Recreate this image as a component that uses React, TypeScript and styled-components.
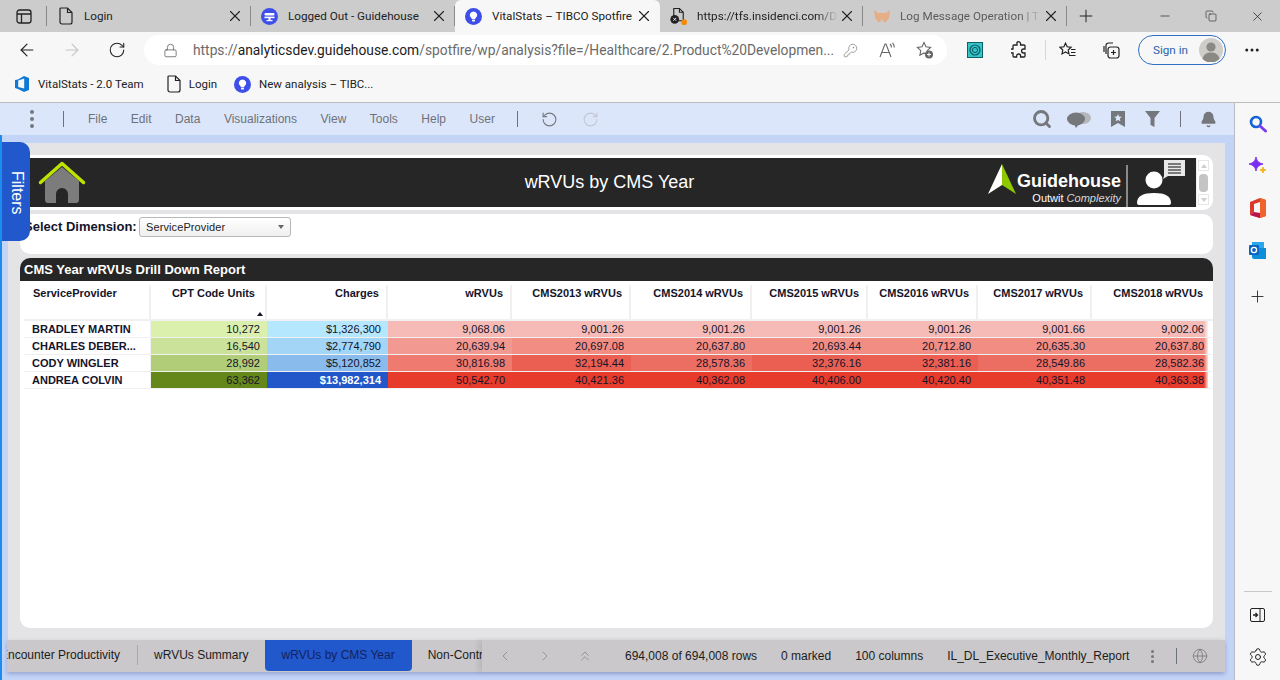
import React from 'react';
import styled, { createGlobalStyle } from 'styled-components';
import {
  ArrowLeft,
  ArrowRight,
  Bell,
  ChevronLeft,
  ChevronRight,
  ChevronsUp,
  Copy,
  Globe,
  KeyRound,
  Lock,
  Minus,
  MoreHorizontal,
  Plus,
  RotateCcw,
  RotateCw,
  Search,
  Settings,
  X,
} from 'lucide-react';

const COLUMNS = '127px 116px 121px 124px 119px 121px 116px 110px 114px 116px';
const CHROME_FONT = 'Roboto, "Noto Sans", sans-serif';
const APP_FONT = '"Liberation Sans", Arial, sans-serif';

const GlobalStyle = createGlobalStyle`
  html, body, #root { margin: 0; padding: 0; height: 100%; }
  body { overflow: hidden; background: #f7f7f7; }
  * { box-sizing: border-box; }
`;

const DocIcon = () => (
  <svg width="14" height="18" viewBox="0 0 14 18" fill="none" stroke="#222" strokeWidth="1.2">
    <path d="M2 1h6.5L13 5.5V15a2 2 0 0 1-2 2H3a2 2 0 0 1-2-2V2a1 1 0 0 1 1-1z" />
    <path d="M8.5 1v4.5H13" />
  </svg>
);

const SpotfireIcon = () => (
  <svg width="17" height="17" viewBox="0 0 17 17">
    <circle cx="8.5" cy="8.5" r="8.5" fill="#3d4fe8" />
    <path d="M8.5 3.4a3.7 3.7 0 0 0-2.2 6.7c.4.3.6.7.6 1.1h3.2c0-.4.2-.8.6-1.1a3.7 3.7 0 0 0-2.2-6.7z" fill="#fff" />
    <rect x="7" y="11.8" width="3" height="1.6" rx=".6" fill="#fff" />
  </svg>
);

const GuidehouseTabIcon = () => (
  <svg width="17" height="17" viewBox="0 0 17 17">
    <circle cx="8.5" cy="8.5" r="8.5" fill="#3d4fe8" />
    <rect x="3.5" y="5" width="10" height="2.6" rx="1" fill="#fff" />
    <rect x="3.5" y="8.6" width="10" height="1.6" fill="#fff" />
    <rect x="7.5" y="10" width="2" height="3" fill="#fff" />
    <rect x="5.5" y="12" width="6" height="1.2" fill="#fff" />
  </svg>
);

const TfsIcon = () => (
  <svg width="18" height="19" viewBox="0 0 18 19" fill="none">
    <path d="M4 1h6l4 4v9H4z" stroke="#222" strokeWidth="1.2" />
    <path d="M10 1v4h4" stroke="#222" strokeWidth="1.2" />
    <circle cx="5" cy="12.5" r="4.6" fill="#222" />
    <path d="M3.5 11l3 3M6.5 11l-3 3" stroke="#fff" strokeWidth=".9" />
    <circle cx="15" cy="15.5" r="3" fill="#f58a07" />
  </svg>
);

const FoxIcon = () => (
  <svg width="16" height="13" viewBox="0 0 16 13">
    <path d="M0 0l4 3h8l4-3-1 8-3 4h-2L8 9l-2 3H4L1 8z" fill="#e6ae86" />
  </svg>
);

const AzureIcon = () => (
  <svg width="16" height="18" viewBox="0 0 16 18">
    <path d="M10 1L4 4.5 1 5v8l3 1 6 3 5-2V3z" fill="#0f78d4" />
    <path d="M4.2 5.5l6-2v10l-6-1.4z" fill="#f7f7f7" />
  </svg>
);

const ExtensionTile = () => (
  <svg width="16" height="16" viewBox="0 0 16 16" fill="none">
    <rect width="16" height="16" fill="#35c4c8" />
    <rect x=".5" y=".5" width="15" height="15" stroke="#0f5f68" />
    <circle cx="8" cy="8" r="5" stroke="#0d5964" strokeWidth="1.2" />
    <circle cx="8" cy="8" r="2.6" stroke="#0d5964" />
  </svg>
);

const PuzzleIcon = () => (
  <svg width="16" height="18" viewBox="0 0 16 18" fill="none" stroke="#222" strokeWidth="1.3">
    <path d="M6 1.5a2 2 0 0 1 3.6 1.2V4H13a1 1 0 0 1 1 1v3h-1.4a2 2 0 0 0 0 4H14v3a1 1 0 0 1-1 1H9.6v-1a2 2 0 0 0-4 0v1H3a1 1 0 0 1-1-1v-3H1a2 2 0 0 1 0-4h1V5a1 1 0 0 1 1-1h3z" />
  </svg>
);

const FavListIcon = () => (
  <svg width="17" height="16" viewBox="0 0 17 16" fill="none" stroke="#222" strokeWidth="1.2">
    <path d="M6.5 1.2l1.7 3.6 3.9.5-2.9 2.7.8 3.9-3.5-2-3.5 2 .8-3.9L1 5.3l3.9-.5z" />
    <path d="M12 7.5h4.5M12 10.5h4.5M10 13.5h6.5" />
  </svg>
);

const CollectionsIcon = () => (
  <svg width="17" height="17" viewBox="0 0 17 17" fill="none" stroke="#222" strokeWidth="1.2">
    <path d="M3 12V3.5A2.5 2.5 0 0 1 5.5 1H10" />
    <path d="M1 10V4" />
    <rect x="5" y="5" width="11" height="11" rx="2.5" />
    <path d="M10.5 8v5M8 10.5h5" />
  </svg>
);

const StarAddIcon = () => (
  <svg width="18" height="18" viewBox="0 0 18 18" fill="none">
    <path d="M8 1.5l2 4.3 4.6.6-3.4 3.2.9 4.6L8 11.9l-4.1 2.3.9-4.6L1.400 6.400 6 5.800z" stroke="#666" strokeWidth="1.1" />
    <circle cx="13" cy="13.5" r="4" fill="#666" />
    <path d="M13 11.5v4M11 13.5h4" stroke="#fff" strokeWidth="1" />
  </svg>
);

const ReadAloudIcon = () => (
  <svg width="16" height="16" viewBox="0 0 16 16" fill="none" stroke="#666" strokeWidth="1.1">
    <path d="M1 15L6 2h1l5 13M3 10.5h7" />
    <path d="M11 2c1 1 1.5 2 1.5 3.5M13.5 .8c1.2 1.3 1.8 2.9 1.8 4.7" />
  </svg>
);

const PaneIcon = () => (
  <svg width="16" height="15" viewBox="0 0 16 15" fill="none" stroke="#222" strokeWidth="1.3">
    <rect x="1" y="1" width="14" height="13" rx="2.5" />
    <path d="M1 5h14M5.5 5v9" />
  </svg>
);

const Avatar = () => (
  <svg width="24" height="24" viewBox="0 0 24 24">
    <circle cx="12" cy="12" r="12" fill="#cfcdc9" />
    <circle cx="12" cy="9" r="4.6" fill="#8b8984" />
    <path d="M3.5 21c1-5 4.5-6.500 8.500-6.500s7.500 1.500 8.500 6.500A12 12 0 0 1 3.500 21z" fill="#8b8984" />
  </svg>
);

const ChatsIcon = () => (
  <svg width="24" height="17" viewBox="0 0 24 17">
    <ellipse cx="16" cy="7" rx="8" ry="6" fill="#b4b6ba" />
    <ellipse cx="9" cy="8" rx="9" ry="6.5" fill="#74777c" />
    <path d="M7 13l2 4 3-4z" fill="#74777c" />
  </svg>
);

const BookmarkStarIcon = () => (
  <svg width="14" height="16" viewBox="0 0 14 16">
    <path d="M0 0h14v16l-7-4-7 4z" fill="#74777c" />
    <path d="M7 3l1.1 2.5 2.7.3-2 1.8.6 2.7L7 8.900l-2.400 1.400.6-2.700-2-1.800 2.700-.3z" fill="#dce6fb" />
  </svg>
);

const FunnelIcon = () => (
  <svg width="15" height="16" viewBox="0 0 15 16">
    <path d="M0 0h15L9.5 7v9l-4-2V7z" fill="#74777c" />
  </svg>
);

const HomeIcon = () => (
  <svg width="48" height="43" viewBox="0 0 48 43" fill="none">
    <path d="M7 20L24 6l17 14v19a3 3 0 0 1-3 3h-8V33a6 6 0 0 0-12 0v9h-8a3 3 0 0 1-3-3z" fill="#7c7c7c" />
    <path d="M2.5 21.5L24 2.5l21.5 19" stroke="#bfe300" strokeWidth="3.5" strokeLinecap="round" strokeLinejoin="round" />
  </svg>
);

const LogoMark = () => (
  <svg width="28" height="30" viewBox="0 0 28 30">
    <path d="M14 0L0 30l14-9z" fill="#fff" />
    <path d="M14 0l14 30-14-9z" fill="#8fc700" />
  </svg>
);

const PersonChatIcon = () => (
  <svg width="50" height="46" viewBox="0 0 50 46">
    <path d="M27 0h21v16H31l-5 3 1-3z" fill="#e8e8e8" />
    <path d="M31 4h13M31 7h13M31 10h13M31 13h13" stroke="#555" strokeWidth="1.5" />
    <circle cx="17" cy="20" r="8.5" fill="#fff" />
    <path d="M0 43c0-7 6-10 17-10s17 3 17 10a2 2 0 0 1-2 2H2a2 2 0 0 1-2-2z" fill="#fff" />
  </svg>
);

const SideSearch = () => (
  <svg width="18" height="18" viewBox="0 0 18 18" fill="none" strokeLinecap="round">
    <circle cx="7" cy="7" r="5" stroke="#1264d8" strokeWidth="2.6" />
    <path d="M11 11l5.5 5" stroke="#7c3cec" strokeWidth="3" />
  </svg>
);

const SideSpark = () => (
  <svg width="20" height="20" viewBox="0 0 20 20">
    <path d="M8 1c.8 4 2.5 6 7 7-4.5 1-6.2 3-7 7-.8-4-2.500-6-7-7 4.500-1 6.200-3 7-7z" fill="#7a2ff0" stroke="#7a2ff0" />
    <path d="M15 11c.3 2 1 2.7 3 3-2 .3-2.7 1-3 3-.3-2-1-2.700-3-3 2-.3 2.700-1 3-3z" fill="#f7b012" stroke="#f7b012" />
  </svg>
);

const SideOffice = () => (
  <svg width="16" height="20" viewBox="0 0 16 20">
    <path d="M0 4l10-4 6 2v16l-6 2-10-3 10 1V4L4 6v8l-4 3z" fill="#d83b2b" />
    <path d="M10 0l6 2v16l-6 2z" fill="#f0642c" />
    <path d="M0 17l4-3 6 1v5z" fill="#b8134f" />
  </svg>
);

const SideOutlook = () => (
  <svg width="17" height="17" viewBox="0 0 17 17" fill="none">
    <rect x="3" y="0" width="12" height="8" fill="#28a8ea" />
    <path d="M3 6h14v11H5a2 2 0 0 1-2-2z" fill="#0c8fd8" />
    <rect x="0" y="3" width="10" height="10" rx="1" fill="#0a64c2" />
    <circle cx="5" cy="8" r="2.6" stroke="#fff" strokeWidth="1.4" />
  </svg>
);

const SidePanelIcon = () => (
  <svg width="15" height="14" viewBox="0 0 15 14" fill="none" stroke="#222">
    <rect x=".5" y=".5" width="14" height="13" rx="1.5" />
    <path d="M10 .5v13" />
    <path d="M3 7h4M5.5 5l2 2-2 2" strokeWidth="1.3" />
  </svg>
);

const Page = styled.div`
  width: 1280px;
  height: 680px;
  display: flex;
  flex-direction: column;
  overflow: hidden;
  font-family: ${CHROME_FONT};
`;

const TabStrip = styled.div`
  height: 32px;
  background: #cccccc;
  display: flex;
  align-items: stretch;
  flex: none;
`;

const StripButton = styled.div`
  width: 47px;
  display: flex;
  align-items: center;
  justify-content: center;
  position: relative;
  &::after {
    content: '';
    position: absolute;
    right: 0;
    top: 6px;
    bottom: 6px;
    width: 1px;
    background: #8a8a8a;
  }
`;

const Tab = styled.div<{ $active?: boolean; $width: number; $dim?: boolean }>`
  width: ${({ $width }) => $width}px;
  display: flex;
  align-items: center;
  gap: 10px;
  padding: 0 10px;
  font-size: 11.7px;
  color: ${({ $dim }) => ($dim ? '#5c5c5c' : '#222')};
  background: ${({ $active }) => ($active ? '#f7f7f7' : 'transparent')};
  border-radius: ${({ $active }) => ($active ? '6px 6px 0 0' : '0')};
  position: relative;
  &::after {
    content: '';
    display: ${({ $active }) => ($active ? 'none' : 'block')};
    position: absolute;
    right: 0;
    top: 6px;
    bottom: 6px;
    width: 1px;
    background: #8a8a8a;
  }
`;

const TabIcon = styled.span`
  width: 17px;
  flex: none;
  display: flex;
  align-items: center;
  justify-content: center;
`;

const TabLabel = styled.span<{ $fade?: boolean }>`
  flex: 1;
  min-width: 0;
  white-space: nowrap;
  overflow: hidden;
  ${({ $fade }) =>
    $fade
      ? `-webkit-mask-image: linear-gradient(to right, #000 85%, transparent);
         mask-image: linear-gradient(to right, #000 85%, transparent);`
      : ''}
`;

const TabClose = styled(X)`
  width: 18px;
  height: 18px;
  margin: 0 -3px 0 -10px;
  flex: none;
`;

const StripPlus = styled.div`
  width: 37px;
  display: flex;
  align-items: center;
  justify-content: center;
`;

const WindowControls = styled.div`
  margin-left: auto;
  display: flex;
  align-items: center;
  gap: 33px;
  padding-right: 15px;
`;

const NavBar = styled.div`
  height: 36px;
  flex: none;
  background: #f7f7f7;
  display: flex;
  align-items: center;
  padding-left: 17px;
`;

const NavButton = styled.div<{ $gap?: number }>`
  width: 20px;
  height: 20px;
  margin-left: ${({ $gap }) => $gap ?? 0}px;
  display: flex;
  align-items: center;
  justify-content: center;
  flex: none;
`;

const AddressBar = styled.div`
  width: 803px;
  height: 30px;
  margin-left: 17px;
  border-radius: 15px;
  background: #fff;
  display: flex;
  align-items: center;
  padding: 0 13px 0 19px;
  flex: none;
`;

const Url = styled.div`
  flex: 1;
  margin-left: 15px;
  font-size: 13.8px;
  color: #6a6a6a;
  white-space: nowrap;
  overflow: hidden;
  b {
    font-weight: 400;
    color: #1c1c1c;
  }
`;

const AddressTools = styled.div`
  display: flex;
  align-items: center;
  gap: 21px;
`;

const NavDivider = styled.div`
  width: 1px;
  height: 20px;
  background: #d6d6d6;
  margin-left: 16px;
  flex: none;
`;

const SignIn = styled.div`
  width: 88px;
  height: 30px;
  margin-left: 17px;
  border: 1px solid #2f6fc4;
  border-radius: 15px;
  display: flex;
  align-items: center;
  justify-content: space-between;
  padding: 0 2px 0 14px;
  font-size: 11.7px;
  color: #2a63ad;
  flex: none;
`;

const BookmarkBar = styled.div`
  height: 35px;
  flex: none;
  background: #f7f7f7;
  border-bottom: 1px solid #bdbdbd;
  display: flex;
  align-items: center;
  padding: 0 0 2px 14px;
  font-size: 11.5px;
  color: #222;
`;

const Bookmark = styled.div<{ $gap?: number }>`
  display: flex;
  align-items: center;
  gap: 8px;
  margin-left: ${({ $gap }) => $gap ?? 0}px;
`;

const Body = styled.div`
  flex: 1;
  min-height: 0;
  display: flex;
`;

const Main = styled.div`
  width: 1235px;
  flex: none;
  position: relative;
  background: #c3d4f7;
  border-right: 1px solid #b9bcc4;
  display: flex;
  flex-direction: column;
  font-family: ${APP_FONT};
  &::before {
    content: '';
    position: absolute;
    left: 0;
    top: 32px;
    bottom: 0;
    width: 2px;
    background: #1c8cf0;
  }
`;

const AppBar = styled.div`
  height: 32px;
  flex: none;
  background: #dce6fb;
  display: flex;
  align-items: center;
  color: #6d7279;
  font-size: 12px;
`;

const DotsSlot = styled.div`
  width: 63px;
  display: flex;
  justify-content: center;
  padding-left: 1px;
`;

const Dots = styled.span<{ $small?: boolean }>`
  display: flex;
  flex-direction: column;
  gap: ${({ $small }) => ($small ? 2 : 3)}px;
  i {
    display: block;
    width: ${({ $small }) => ($small ? 3 : 4)}px;
    height: ${({ $small }) => ($small ? 3 : 4)}px;
    border-radius: 50%;
    background: #74777c;
  }
`;

const BarDivider = styled.div<{ $gap?: number }>`
  width: 1px;
  height: 16px;
  margin-left: ${({ $gap }) => $gap ?? 0}px;
  background: #6d7279;
  flex: none;
`;

const Menu = styled.div`
  display: flex;
  gap: 23.5px;
  padding: 0 22px 0 24px;
`;

const UndoGroup = styled.div`
  display: flex;
  gap: 24px;
  margin-left: 23px;
  align-items: center;
`;

const BarTools = styled.div`
  margin-left: auto;
  display: flex;
  align-items: center;
  gap: 20px;
  padding-right: 18px;
`;

const BarSearch = styled(Search)`
  margin-right: -5px;
`;

const BarBell = styled(Bell)`
  margin: 0 -1px;
`;

const Workspace = styled.div`
  flex: 1;
  min-height: 0;
  margin: 8px 9px 0 8px;
  background: #e4e4e6;
  padding: 12px;
  display: flex;
  flex-direction: column;
  gap: 4px;
`;

const FiltersTab = styled.div`
  position: absolute;
  left: 2px;
  top: 39px;
  width: 28px;
  height: 99px;
  padding: 3px 0 0 1px;
  background: #2158cb;
  border-radius: 0 10px 10px 0;
  color: #fff;
  font-size: 16px;
  display: flex;
  align-items: center;
  justify-content: center;
  writing-mode: vertical-rl;
  z-index: 2;
`;

const HeaderPanel = styled.div`
  height: 55px;
  flex: none;
  background: #fff;
  border-radius: 0 10px 10px 0;
  padding: 3px 3px 3px 0;
  display: flex;
`;

const HeaderBar = styled.div`
  flex: 1;
  background: #262626;
  display: flex;
  align-items: center;
  position: relative;
  padding-left: 18px;
`;

const HeaderTitle = styled.div`
  position: absolute;
  left: 0;
  right: 0;
  top: 13px;
  padding-left: 3px;
  text-align: center;
  color: #fff;
  font-size: 18px;
  line-height: 22px;
`;

const Brand = styled.div`
  margin-left: auto;
  display: flex;
  align-items: flex-start;
  height: 100%;
  position: relative;
`;

const BrandMark = styled.div`
  margin: 6px 1px 0 0;
`;

const BrandText = styled.div`
  color: #fff;
  text-align: right;
  padding-top: 13px;
  strong {
    display: block;
    font-size: 18px;
    line-height: 20px;
  }
  span {
    display: block;
    font-size: 11px;
    line-height: 14px;
    em {
      font-weight: 300;
      color: #d8d8d8;
    }
  }
`;

const BrandDivider = styled.div`
  width: 2px;
  height: 42px;
  margin: 7px 9px 0 5px;
  background: #8a8a8a;
`;

const BrandPerson = styled.div`
  margin: 2px 9px 0 0;
  height: 47px;
`;

const MiniScroll = styled.div`
  width: 14px;
  flex: none;
  background: #fff;
  display: flex;
  flex-direction: column;
  align-items: center;
  justify-content: space-between;
  padding: 2px 0;
  border-left: 1px solid #eee;
`;

const ScrollArrow = styled.div<{ $down?: boolean }>`
  width: 11px;
  height: 11px;
  border: 1px solid #e6e6e6;
  display: flex;
  align-items: center;
  justify-content: center;
  &::after {
    content: '';
    border-left: 3px solid transparent;
    border-right: 3px solid transparent;
    border-${({ $down }) => ($down ? 'top' : 'bottom')}: 4px solid #cfcfcf;
  }
`;

const Thumb = styled.div`
  width: 9px;
  height: 18px;
  border-radius: 4px;
  background: #c4c4c4;
`;

const SelectPanel = styled.div`
  height: 40px;
  flex: none;
  background: #fff;
  border-radius: 10px;
  display: flex;
  align-items: flex-start;
  padding: 3px 0 0 4px;
`;

const SelectLabel = styled.label`
  width: 115px;
  flex: none;
  font-size: 13px;
  font-weight: 700;
  color: #14142a;
  line-height: 20px;
  white-space: nowrap;
`;

const SelectBox = styled.div`
  width: 152px;
  height: 20px;
  border: 1px solid #b8b8b8;
  border-radius: 3px;
  background: linear-gradient(#ffffff, #efefef);
  font-size: 11px;
  color: #222;
  display: flex;
  align-items: center;
  justify-content: space-between;
  padding: 0 6px;
  letter-spacing: 0.1px;
  &::after {
    content: '';
    border-left: 3.5px solid transparent;
    border-right: 3.5px solid transparent;
    border-top: 4px solid #666;
  }
`;

const ReportPanel = styled.div`
  flex: 1;
  min-height: 0;
  background: #fff;
  border-radius: 10px;
`;

const ReportTitle = styled.div`
  height: 23px;
  background: #262626;
  border-radius: 10px 10px 0 0;
  color: #fff;
  font-size: 13px;
  font-weight: 700;
  line-height: 23px;
  padding-left: 4px;
`;

const Table = styled.div`
  padding-left: 4px;
  font-size: 11px;
  color: #14142a;
`;

const HeadRow = styled.div`
  display: grid;
  grid-template-columns: ${COLUMNS};
  height: 40px;
  padding-top: 4px;
  border-bottom: 2px solid #f0f0f0;
`;

const HeadCell = styled.div<{ $left?: boolean; $sorted?: boolean }>`
  position: relative;
  font-weight: 700;
  line-height: 16px;
  white-space: nowrap;
  text-align: ${({ $left }) => ($left ? 'left' : 'right')};
  padding: 0 7px 0 9px;
  border-right: 2px solid #f0f0f0;
  &:nth-child(2) {
    padding-right: 10px;
  }
  &:last-child {
    padding-right: 5px;
    border-right: 0;
  }
  &::after {
    content: '';
    display: ${({ $sorted }) => ($sorted ? 'block' : 'none')};
    position: absolute;
    right: 2px;
    bottom: 3px;
    border-left: 3.5px solid transparent;
    border-right: 3.5px solid transparent;
    border-bottom: 4px solid #14142a;
  }
`;

const DataRow = styled.div`
  display: grid;
  grid-template-columns: ${COLUMNS};
  height: 17px;
  border-bottom: 1px solid #f0f0f0;
  position: relative;
  &::after {
    content: '';
    position: absolute;
    right: 5px;
    top: 0;
    bottom: 0;
    width: 4px;
    background: linear-gradient(to right, rgba(255, 255, 255, 0), rgba(255, 255, 255, 0.8));
  }
`;

const NameCell = styled.div`
  font-weight: 700;
  line-height: 16px;
  padding-left: 8px;
  white-space: nowrap;
  overflow: hidden;
  border-right: 1px solid #f0f0f0;
`;

const ValueCell = styled.div<{ $bg: string; $light?: boolean }>`
  background: ${({ $bg }) => $bg};
  color: ${({ $light }) => ($light ? '#fff' : '#14142a')};
  font-weight: ${({ $light }) => ($light ? 700 : 400)};
  line-height: 16px;
  text-align: right;
  padding-right: 7px;
  &:last-child {
    padding-right: 4px;
  }
`;

const StatusBar = styled.div`
  height: 32px;
  flex: none;
  margin: 0 9px 8px 7px;
  background: #cac8cb;
  box-shadow: 0 2px 4px rgba(60, 80, 140, 0.35);
  display: flex;
  font-size: 12px;
  color: #1c1c1c;
`;

const PageTabs = styled.div`
  width: 475px;
  flex: none;
  overflow: hidden;
  display: flex;
`;

const PageTab = styled.div<{ $active?: boolean; $first?: boolean }>`
  flex: none;
  padding: 0 ${({ $active }) => ($active ? 17 : 16)}px;
  margin-left: ${({ $first }) => ($first ? '-23px' : '0')};
  line-height: 30px;
  height: 31px;
  white-space: nowrap;
  background: ${({ $active }) => ($active ? '#2158cb' : 'transparent')};
  color: ${({ $active }) => ($active ? '#14235f' : '#1c1c1c')};
  border-radius: ${({ $active }) => ($active ? '0 0 4px 4px' : '0')};
`;

const TabRule = styled.div`
  width: 1px;
  height: 20px;
  margin: 5px 0 0 1px;
  background: #aaa8ab;
  flex: none;
`;

const StatusRight = styled.div`
  flex: 1;
  display: flex;
  align-items: center;
  padding-left: 15px;
  background: #cac8cb;
  box-shadow: -4px 0 5px rgba(0, 0, 0, 0.08);
  z-index: 1;
`;

const Arrows = styled.div`
  display: flex;
  gap: 24px;
  color: #86868a;
  margin-right: 32px;
  line-height: 0;
`;

const Stats = styled.div`
  display: flex;
  gap: 24px;
  white-space: nowrap;
`;

const StatusTools = styled.div`
  display: flex;
  align-items: center;
  margin-left: 22px;
`;

const StatusGlobe = styled(Globe)`
  margin-left: 15px;
`;

const Sidebar = styled.div`
  width: 45px;
  flex: none;
  background: #f7f7f7;
  display: flex;
  flex-direction: column;
  align-items: center;
  padding: 11px 0 13px;
`;

const SideItem = styled.div<{ $shift?: number }>`
  width: 20px;
  height: 20px;
  display: flex;
  align-items: center;
  justify-content: center;
  margin-top: ${({ $shift }) => $shift ?? 0}px;
  margin-bottom: 22px;
  &:last-child {
    margin-bottom: 0;
  }
`;

const SideRule = styled.div`
  width: 28px;
  height: 1px;
  background: #c8c8c8;
  margin: auto 0 13px;
`;

type Row = { name: string; values: [string, string][]; light?: boolean };

const headers = [
  'CPT Code Units',
  'Charges',
  'wRVUs',
  'CMS2013 wRVUs',
  'CMS2014 wRVUs',
  'CMS2015 wRVUs',
  'CMS2016 wRVUs',
  'CMS2017 wRVUs',
  'CMS2018 wRVUs',
];

const rows: Row[] = [
  {
    name: 'BRADLEY MARTIN',
    values: [
      ['10,272', '#dcf0ae'],
      ['$1,326,300', '#b5e7ff'],
      ['9,068.06', '#f6bbb6'],
      ['9,001.26', '#f6bbb6'],
      ['9,001.26', '#f6bbb6'],
      ['9,001.26', '#f6bbb6'],
      ['9,001.26', '#f6bbb6'],
      ['9,001.66', '#f6bbb6'],
      ['9,002.06', '#f6bbb6'],
    ],
  },
  {
    name: 'CHARLES DEBER...',
    values: [
      ['16,540', '#cbe29b'],
      ['$2,774,790', '#a3d5f6'],
      ['20,639.94', '#f29a92'],
      ['20,697.08', '#f28d84'],
      ['20,637.80', '#f28d84'],
      ['20,693.44', '#f28d84'],
      ['20,712.80', '#f28d84'],
      ['20,635.30', '#f28d84'],
      ['20,637.80', '#f28d84'],
    ],
  },
  {
    name: 'CODY WINGLER',
    values: [
      ['28,992', '#b2cd78'],
      ['$5,120,852', '#89bbec'],
      ['30,816.98', '#ef7a6f'],
      ['32,194.44', '#eb5f52'],
      ['28,578.36', '#ec6d61'],
      ['32,376.16', '#eb5f52'],
      ['32,381.16', '#eb5f52'],
      ['28,549.86', '#ec6d61'],
      ['28,582.36', '#ec6d61'],
    ],
  },
  {
    name: 'ANDREA COLVIN',
    light: true,
    values: [
      ['63,362', '#65871a'],
      ['$13,982,314', '#2157c9'],
      ['50,542.70', '#e73c2c'],
      ['40,421.36', '#e73c2c'],
      ['40,362.08', '#e73c2c'],
      ['40,406.00', '#e73c2c'],
      ['40,420.40', '#e73c2c'],
      ['40,351.48', '#e73c2c'],
      ['40,363.38', '#e73c2c'],
    ],
  },
];

const menu = ['File', 'Edit', 'Data', 'Visualizations', 'View', 'Tools', 'Help', 'User'];

export default function App(): JSX.Element {
  return (
    <Page>
      <GlobalStyle />
      <TabStrip>
        <StripButton>
          <PaneIcon />
        </StripButton>
        <Tab $width={204}>
          <TabIcon><DocIcon /></TabIcon>
          <TabLabel>Login</TabLabel>
          <TabClose strokeWidth={1.5} />
        </Tab>
        <Tab $width={204}>
          <TabIcon><GuidehouseTabIcon /></TabIcon>
          <TabLabel>Logged Out - Guidehouse</TabLabel>
          <TabClose strokeWidth={1.5} />
        </Tab>
        <Tab $width={205} $active>
          <TabIcon><SpotfireIcon /></TabIcon>
          <TabLabel>VitalStats – TIBCO Spotfire</TabLabel>
          <TabClose strokeWidth={1.5} />
        </Tab>
        <Tab $width={203}>
          <TabIcon><TfsIcon /></TabIcon>
          <TabLabel $fade>https://tfs.insidenci.com/D</TabLabel>
          <TabClose strokeWidth={1.5} />
        </Tab>
        <Tab $width={204} $dim>
          <TabIcon><FoxIcon /></TabIcon>
          <TabLabel $fade>Log Message Operation | T</TabLabel>
          <TabClose strokeWidth={1.5} color="#222" />
        </Tab>
        <StripPlus>
          <Plus size={20} strokeWidth={1.2} color="#222" />
        </StripPlus>
        <WindowControls>
          <Minus size={14} strokeWidth={1.2} color="#222" />
          <Copy size={12} strokeWidth={1.2} color="#222" />
          <X size={15} strokeWidth={1.2} color="#222" />
        </WindowControls>
      </TabStrip>

      <NavBar>
        <NavButton><ArrowLeft size={20} strokeWidth={1.4} color="#222" /></NavButton>
        <NavButton $gap={25}><ArrowRight size={20} strokeWidth={1.4} color="#c6c6c6" /></NavButton>
        <NavButton $gap={25}><RotateCw size={18} strokeWidth={1.4} color="#222" /></NavButton>
        <AddressBar>
          <Lock size={15} strokeWidth={1.2} color="#555" />
          <Url>
            https://<b>analyticsdev.guidehouse.com</b>/spotfire/wp/analysis?file=/Healthcare/2.Product%20Developmen...
          </Url>
          <AddressTools>
            <KeyRound size={15} strokeWidth={1.1} color="#777" />
            <ReadAloudIcon />
            <StarAddIcon />
          </AddressTools>
        </AddressBar>
        <NavButton $gap={18}><ExtensionTile /></NavButton>
        <NavButton $gap={24}><PuzzleIcon /></NavButton>
        <NavDivider />
        <NavButton $gap={11}><FavListIcon /></NavButton>
        <NavButton $gap={24}><CollectionsIcon /></NavButton>
        <SignIn>
          Sign in
          <Avatar />
        </SignIn>
        <NavButton $gap={16}><MoreHorizontal size={18} strokeWidth={2} color="#222" /></NavButton>
      </NavBar>

      <BookmarkBar>
        <Bookmark><AzureIcon />VitalStats - 2.0 Team</Bookmark>
        <Bookmark $gap={23}><DocIcon />Login</Bookmark>
        <Bookmark $gap={17}><SpotfireIcon />New analysis – TIBC...</Bookmark>
      </BookmarkBar>

      <Body>
        <Main>
          <AppBar>
            <DotsSlot>
              <Dots><i /><i /><i /></Dots>
            </DotsSlot>
            <BarDivider />
            <Menu>
              {menu.map((item) => (
                <span key={item}>{item}</span>
              ))}
            </Menu>
            <BarDivider />
            <UndoGroup>
              <RotateCcw size={17} strokeWidth={1.6} color="#777a80" />
              <RotateCw size={17} strokeWidth={1.6} color="#c3c8d4" />
            </UndoGroup>
            <BarTools>
              <BarSearch size={20} strokeWidth={3.4} color="#74777c" />
              <ChatsIcon />
              <BookmarkStarIcon />
              <FunnelIcon />
              <BarDivider />
              <BarBell size={17} fill="#74777c" color="#74777c" />
            </BarTools>
          </AppBar>

          <FiltersTab>Filters</FiltersTab>

          <Workspace>
            <HeaderPanel>
              <HeaderBar>
                <HomeIcon />
                <HeaderTitle>wRVUs by CMS Year</HeaderTitle>
                <Brand>
                  <BrandMark><LogoMark /></BrandMark>
                  <BrandText>
                    <strong>Guidehouse</strong>
                    <span>Outwit <em>Complexity</em></span>
                  </BrandText>
                  <BrandDivider />
                  <BrandPerson><PersonChatIcon /></BrandPerson>
                </Brand>
              </HeaderBar>
              <MiniScroll>
                <ScrollArrow />
                <Thumb />
                <ScrollArrow $down />
              </MiniScroll>
            </HeaderPanel>

            <SelectPanel>
              <SelectLabel>Select Dimension:</SelectLabel>
              <SelectBox>ServiceProvider</SelectBox>
            </SelectPanel>

            <ReportPanel>
              <ReportTitle>CMS Year wRVUs Drill Down Report</ReportTitle>
              <Table>
                <HeadRow>
                  <HeadCell $left>ServiceProvider</HeadCell>
                  {headers.map((header, index) => (
                    <HeadCell key={header} $sorted={index === 0}>{header}</HeadCell>
                  ))}
                </HeadRow>
                {rows.map((row) => (
                  <DataRow key={row.name}>
                    <NameCell>{row.name}</NameCell>
                    {row.values.map(([value, color], index) => (
                      <ValueCell key={index} $bg={color} $light={row.light && index === 1}>
                        {value}
                      </ValueCell>
                    ))}
                  </DataRow>
                ))}
              </Table>
            </ReportPanel>
          </Workspace>

          <StatusBar>
            <PageTabs>
              <PageTab $first>Encounter Productivity</PageTab>
              <TabRule />
              <PageTab>wRVUs Summary</PageTab>
              <PageTab $active>wRVUs by CMS Year</PageTab>
              <PageTab>Non-Contr</PageTab>
            </PageTabs>
            <StatusRight>
              <Arrows>
                <ChevronLeft size={16} strokeWidth={1.2} />
                <ChevronRight size={16} strokeWidth={1.2} />
                <ChevronsUp size={16} strokeWidth={1.2} />
              </Arrows>
              <Stats>
                <span>694,008 of 694,008 rows</span>
                <span>0 marked</span>
                <span>100 columns</span>
                <span>IL_DL_Executive_Monthly_Report</span>
              </Stats>
              <StatusTools>
                <Dots $small><i /><i /><i /></Dots>
                <BarDivider $gap={22} />
                <StatusGlobe size={16} strokeWidth={1.2} color="#74777c" />
              </StatusTools>
            </StatusRight>
          </StatusBar>
        </Main>

        <Sidebar>
          <SideItem><SideSearch /></SideItem>
          <SideItem><SideSpark /></SideItem>
          <SideItem><SideOffice /></SideItem>
          <SideItem><SideOutlook /></SideItem>
          <SideItem $shift={4}><Plus size={19} strokeWidth={1.2} color="#333" /></SideItem>
          <SideRule />
          <SideItem><SidePanelIcon /></SideItem>
          <SideItem><Settings size={20} strokeWidth={1.2} color="#222" /></SideItem>
        </Sidebar>
      </Body>
    </Page>
  );
}
